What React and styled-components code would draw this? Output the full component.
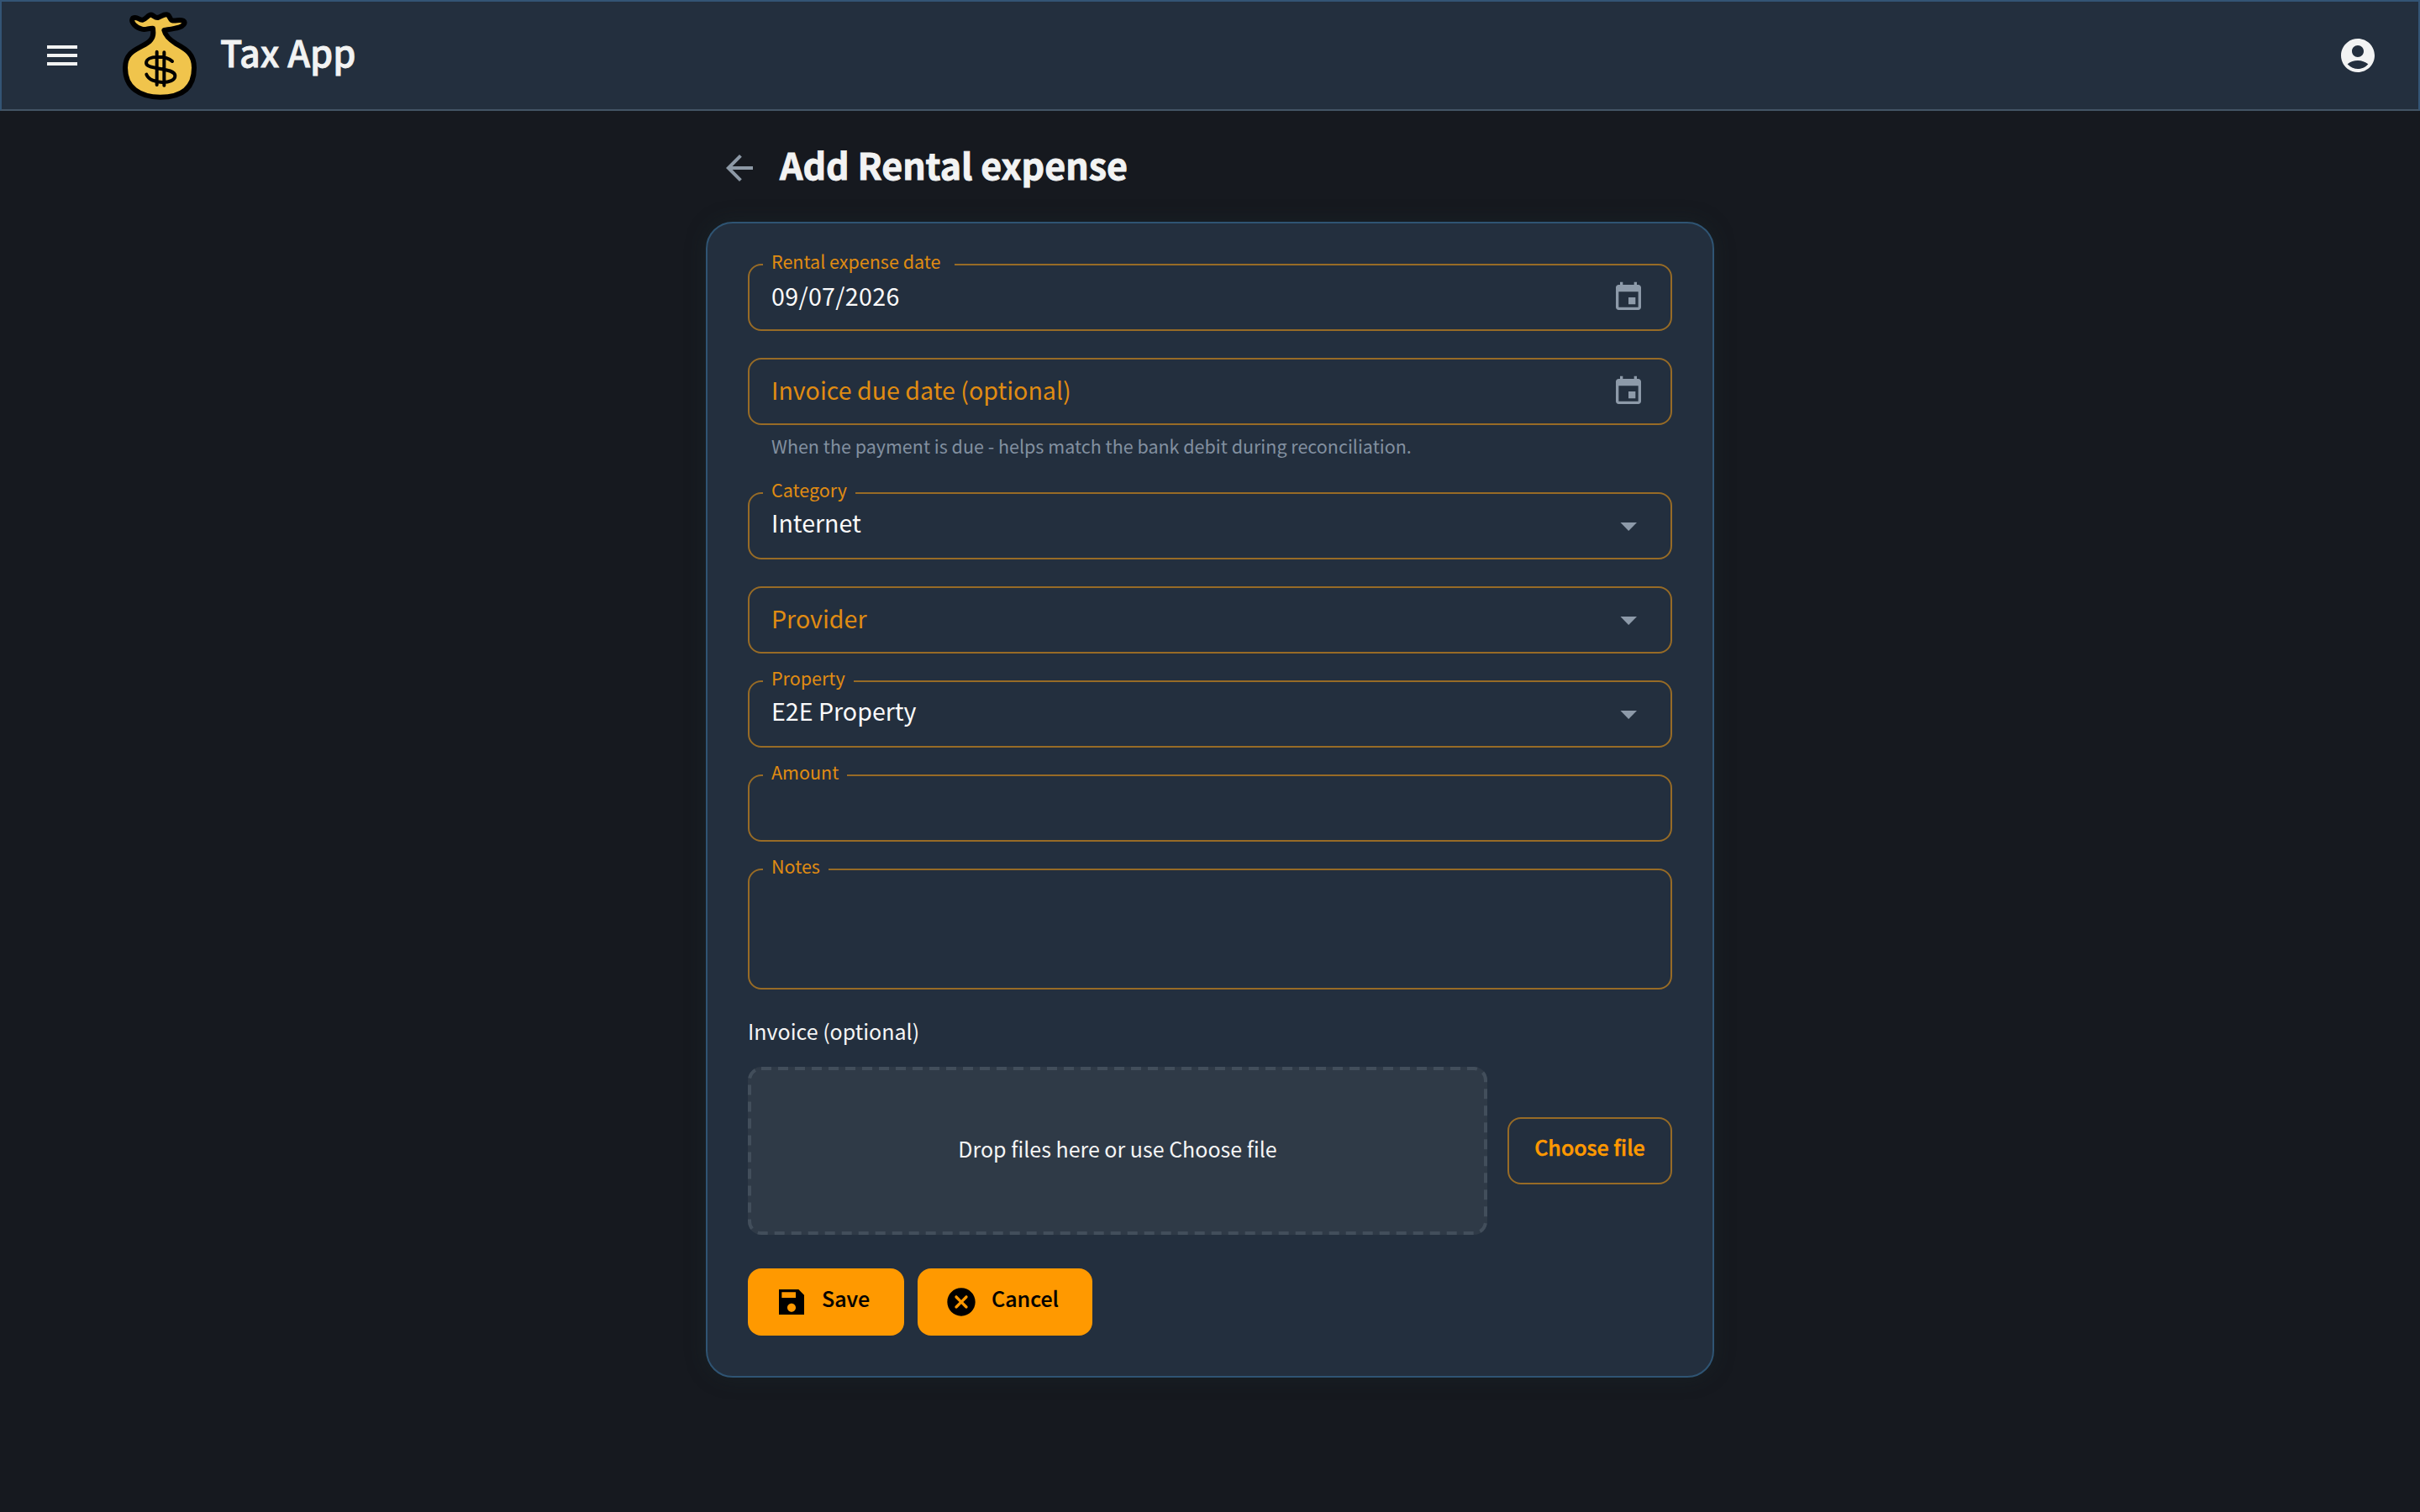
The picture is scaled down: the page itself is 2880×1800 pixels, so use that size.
import React from "react";
import styled, { createGlobalStyle } from "styled-components";

const GlobalStyle = createGlobalStyle`
  * { box-sizing: border-box; }
  body {
    margin: 0;
    background: #16191f;
    font-family: "Noto Sans CJK SC", "Noto Sans", sans-serif;
  }
`;

const Page = styled.div`
  min-height: 1800px;
  background: #16191f;
`;

const Toolbar = styled.header`
  height: 132px;
  padding: 0 48px;
  display: flex;
  align-items: center;
  background: #232f3e;
  border: 2px solid #335475;
  border-bottom-color: #435465;
  color: #f2f3f3;
`;

const Icon = styled.svg`
  display: block;
  flex: none;
  width: ${(p) => p.$size || 48}px;
  height: ${(p) => p.$size || 48}px;
  fill: ${(p) => p.$color || "currentColor"};
`;

const Logo = styled.svg`
  display: block;
  width: 90px;
  height: 106px;
  margin: 1px 0 0 47px;
`;

const AppName = styled.span`
  flex: 1;
  margin-left: 27px;
  padding-bottom: 11px;
  font-size: 43.2px;
  line-height: 60px;
  font-weight: 500;
  -webkit-text-stroke: 0.8px currentColor;
`;

const Content = styled.main`
  width: 1200px;
  margin: 0 auto;
`;

const TitleRow = styled.div`
  height: 132px;
  padding: 44px 0 0 16px;
  display: flex;
  align-items: flex-start;
  gap: 24px;
  color: #8d99a6;
`;

const Title = styled.h1`
  margin: -11px 0 0;
  font-size: 42.9px;
  line-height: 60px;
  font-weight: 700;
  -webkit-text-stroke: 0.9px currentColor;
  color: #f2f3f3;
`;

const Card = styled.section`
  height: 1376px;
  padding: 48px;
  background: #232f3e;
  border: 2px solid #2f5473;
  border-radius: 32px;
  box-shadow: 0 0 24px rgba(30, 48, 48, 0.35);
`;

const Fields = styled.div`
  display: flex;
  flex-direction: column;
  gap: 32px;
`;

const Field = styled.div`
  position: relative;
  height: ${(p) => p.$height || 80}px;
  padding: 0 30px 0 26px;
  display: flex;
  align-items: center;
  justify-content: space-between;
  border: 2px solid #976b26;
  border-radius: 16px;
`;

const FloatingLabel = styled.label`
  position: absolute;
  top: -20px;
  left: 16px;
  width: ${(p) => p.$notch}px;
  padding-left: 10px;
  background: #232f3e;
  color: #e08c12;
  font-size: 21.5px;
  line-height: 30px;
  white-space: nowrap;
`;

const Value = styled.span`
  padding-bottom: ${(p) => p.$lift || 5}px;
  font-size: 28.6px;
  line-height: 40px;
  letter-spacing: ${(p) => (p.$digits ? "0.32px" : "normal")};
  color: ${(p) => (p.$placeholder ? "#e08c12" : "#fafafa")};
`;

const FieldGroup = styled.div`
  height: 128px;
`;

const Hint = styled.p`
  margin: 9px 0 0 28px;
  font-size: 21.5px;
  line-height: 32px;
  color: #8290a0;
`;

const SectionLabel = styled.div`
  margin-top: 29px;
  font-size: 25px;
  line-height: 40px;
  color: #f5f5f5;
`;

const UploadRow = styled.div`
  margin-top: 23px;
  display: flex;
  align-items: center;
  gap: 24px;
`;

const DropZone = styled.div`
  position: relative;
  flex: 1;
  height: 200px;
  padding-bottom: 6px;
  display: flex;
  align-items: center;
  justify-content: center;
  background: #2f3a47;
  border-radius: 16px;
  color: #f5f5f5;
  font-size: 25px;
`;

const DashedOutline = styled.svg`
  position: absolute;
  inset: 0;
  width: 100%;
  height: 100%;
  fill: none;
  stroke: #424e5b;
  stroke-width: 4px;
  stroke-dasharray: 12 8;
`;

const Button = styled.button`
  height: 80px;
  width: ${(p) => p.$width}px;
  padding: ${(p) => (p.$outlined ? "0" : "0 0 0 32px")};
  display: flex;
  align-items: center;
  justify-content: ${(p) => (p.$outlined ? "center" : "flex-start")};
  gap: 16px;
  border: ${(p) => (p.$outlined ? "2px solid #976b26" : "0")};
  border-radius: 16px;
  background: ${(p) => (p.$outlined ? "transparent" : "#ff9900")};
  color: ${(p) => (p.$outlined ? "#ff9900" : "#000")};
  font-family: inherit;
  font-size: 25px;
  font-weight: 500;
  -webkit-text-stroke: ${(p) => (p.$outlined ? "0.5px" : "0.2px")} currentColor;
`;

const ButtonText = styled.span`
  padding-bottom: 10px;
  line-height: 36px;
`;

const Actions = styled.div`
  margin-top: 40px;
  display: flex;
  gap: 16px;
`;

const CalendarIcon = () => (
  <Icon $size={40} $color="#8d9aa9" viewBox="0 0 24 24">
    <path d="M17 12h-5v5h5v-5zM16 1v2H8V1H6v2H5c-1.11 0-1.99.9-1.99 2L3 19c0 1.1.89 2 2 2h14c1.1 0 2-.9 2-2V5c0-1.1-.9-2-2-2h-1V1h-2zm3 18H5V8h14v11z" />
  </Icon>
);

const ArrowIcon = () => (
  <Icon $size={40} $color="#8d9aa9" viewBox="0 0 40 40">
    <path d="M10.500 16h19.500L20.200 26z" />
  </Icon>
);

const MoneyBag = () => (
  <Logo viewBox="435 40 270 318">
    <path
      d="M474 63 C490 54 496 71 509 69 C522 67 530 48 541 51 C549 54 554 62 563 61 C574 58 588 46 599 51 C607 56 607 69 615 71 C628 74 640 66 655 72 C666 79 652 92 639 96 C622 101 604 103 586 106 C590 125 607 141 630 155 C660 172 693 188 693 240 C693 320 640 345 572 345 C500 345 447 312 447 240 C447 190 480 177 508 162 C535 148 547 136 547 115 L546 99 C530 98 520 106 507 102 C488 98 464 78 474 63Z"
      fill="#f0c44c"
      stroke="#000"
      strokeWidth="18"
      strokeLinejoin="round"
    />
    <path
      d="M615 217 C592 195 522 195 522 223 C522 249 625 237 625 269 C625 300 538 301 523 264 M560 183V301 M586 185V303"
      fill="none"
      stroke="#000"
      strokeWidth="12"
      strokeLinecap="round"
    />
  </Logo>
);

export default function App() {
  return (
    <Page>
      <GlobalStyle />
      <Toolbar>
        <Icon viewBox="0 0 24 24">
          <path d="M3 18h18v-2H3v2zm0-5h18v-2H3v2zm0-7v2h18V6H3z" />
        </Icon>
        <MoneyBag />
        <AppName>Tax App</AppName>
        <Icon viewBox="0 0 24 24">
          <path d="M12 2C6.48 2 2 6.48 2 12s4.48 10 10 10 10-4.48 10-10S17.52 2 12 2zM12 6c1.93 0 3.5 1.57 3.5 3.5S13.93 13 12 13s-3.500-1.570-3.500-3.500S10.070 6 12 6zm0 14c-2.030 0-4.430-.820-6.140-2.880C7.550 15.800 9.680 15 12 15s4.450.800 6.140 2.120C16.430 19.180 14.030 20 12 20z" />
        </Icon>
      </Toolbar>
      <Content>
        <TitleRow>
          <Icon viewBox="0 0 24 24">
            <path d="M20 11H7.830l5.590-5.590L12 4l-8 8 8 8 1.410-1.410L7.830 13H20v-2z" />
          </Icon>
          <Title>Add Rental expense</Title>
        </TitleRow>
        <Card>
          <Fields>
            <Field>
              <FloatingLabel $notch={228}>Rental expense date</FloatingLabel>
              <Value $digits>09/07/2026</Value>
              <CalendarIcon />
            </Field>
            <FieldGroup>
              <Field>
                <Value $placeholder>Invoice due date (optional)</Value>
                <CalendarIcon />
              </Field>
              <Hint>When the payment is due - helps match the bank debit during reconciliation.</Hint>
            </FieldGroup>
            <Field>
              <FloatingLabel $notch={110}>Category</FloatingLabel>
              <Value $lift={9}>Internet</Value>
              <ArrowIcon />
            </Field>
            <Field>
              <Value $placeholder>Provider</Value>
              <ArrowIcon />
            </Field>
            <Field>
              <FloatingLabel $notch={108}>Property</FloatingLabel>
              <Value $lift={9}>E2E Property</Value>
              <ArrowIcon />
            </Field>
            <Field>
              <FloatingLabel $notch={100}>Amount</FloatingLabel>
            </Field>
            <Field $height={144}>
              <FloatingLabel $notch={78}>Notes</FloatingLabel>
            </Field>
          </Fields>
          <SectionLabel>Invoice (optional)</SectionLabel>
          <UploadRow>
            <DropZone>
              <DashedOutline viewBox="0 0 880 200">
                <rect x="2" y="2" width="876" height="196" rx="14" />
              </DashedOutline>
              Drop files here or use Choose file
            </DropZone>
            <Button $outlined $width={196}>
              <ButtonText>Choose file</ButtonText>
            </Button>
          </UploadRow>
          <Actions>
            <Button $width={186}>
              <Icon $size={40} viewBox="0 0 24 24">
                <path d="M17 3H3v18h18V7l-4-4zm-5 16c-1.660 0-3-1.340-3-3s1.340-3 3-3 3 1.340 3 3-1.340 3-3 3zm3-10H5V5h10v4z" />
              </Icon>
              <ButtonText>Save</ButtonText>
            </Button>
            <Button $width={208}>
              <Icon $size={40} viewBox="0 0 24 24">
                <path d="M12 2C6.470 2 2 6.470 2 12s4.470 10 10 10 10-4.470 10-10S17.530 2 12 2zm4.300 14.300c-.390.390-1.020.390-1.410 0L12 13.410 9.110 16.300c-.390.390-1.020.390-1.410 0-.390-.390-.390-1.020 0-1.410L10.590 12 7.700 9.110c-.390-.390-.390-1.020 0-1.410.390-.390 1.020-.390 1.410 0L12 10.590l2.890-2.890c.390-.390 1.020-.390 1.410 0 .390.390.390 1.020 0 1.410L13.410 12l2.890 2.890c.380.380.380 1.020 0 1.410z" />
              </Icon>
              <ButtonText>Cancel</ButtonText>
            </Button>
          </Actions>
        </Card>
      </Content>
    </Page>
  );
}
